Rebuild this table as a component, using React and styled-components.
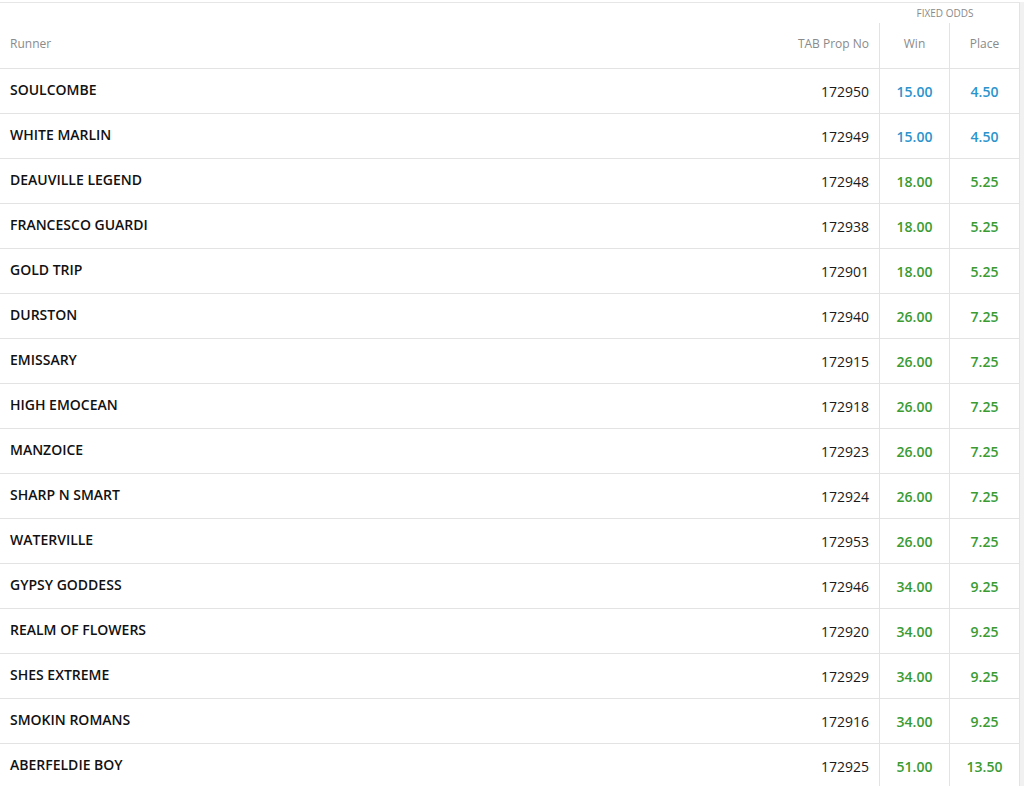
import React from 'react';
import styled, { createGlobalStyle } from 'styled-components';

const GlobalStyle = createGlobalStyle`
  body {
    margin: 0;
    background: #fff;
    font-family: "Open Sans", "Liberation Sans", sans-serif;
  }
`;

const runners = [
  ['SOULCOMBE', '172950', '15.00', '4.50', true],
  ['WHITE MARLIN', '172949', '15.00', '4.50', true],
  ['DEAUVILLE LEGEND', '172948', '18.00', '5.25'],
  ['FRANCESCO GUARDI', '172938', '18.00', '5.25'],
  ['GOLD TRIP', '172901', '18.00', '5.25'],
  ['DURSTON', '172940', '26.00', '7.25'],
  ['EMISSARY', '172915', '26.00', '7.25'],
  ['HIGH EMOCEAN', '172918', '26.00', '7.25'],
  ['MANZOICE', '172923', '26.00', '7.25'],
  ['SHARP N SMART', '172924', '26.00', '7.25'],
  ['WATERVILLE', '172953', '26.00', '7.25'],
  ['GYPSY GODDESS', '172946', '34.00', '9.25'],
  ['REALM OF FLOWERS', '172920', '34.00', '9.25'],
  ['SHES EXTREME', '172929', '34.00', '9.25'],
  ['SMOKIN ROMANS', '172916', '34.00', '9.25'],
  ['ABERFELDIE BOY', '172925', '51.00', '13.50'],
];

const Page = styled.div`
  display: flex;
  height: 786px;
  overflow: hidden;
  padding-top: 2px;
  box-sizing: border-box;
`;

const Table = styled.div`
  width: 1020px;
  border-top: 1px solid #e6e6e6;
  border-right: 1px solid #e3e3e3;
  box-sizing: border-box;
`;

const Gutter = styled.div`
  flex: 1;
  background: #f1f1f1;
`;

const Header = styled.div`
  display: grid;
  grid-template-columns: 1fr 200px 140px;
  height: 65px;
  border-bottom: 1px solid #e3e3e3;
  color: #8a8a8a;
  font-size: 12px;
`;

const HeadCell = styled.div`
  display: flex;
  align-items: center;
  padding: 20px 10px 4px;
  justify-content: ${p => (p.$right ? 'flex-end' : 'flex-start')};
`;

const OddsHead = styled.div`
  display: flex;
  flex-direction: column;
`;

const GroupLabel = styled.div`
  height: 20px;
  display: flex;
  align-items: center;
  justify-content: center;
  font-size: 10px;
  text-transform: uppercase;
  padding-right: 8px;
`;

const SubHead = styled.div`
  flex: 1;
  display: grid;
  grid-template-columns: 70px 70px;
`;

const SubCell = styled.div`
  border-left: 1px solid #e3e3e3;
  display: flex;
  align-items: center;
  justify-content: center;
  padding-bottom: 4px;
`;

const Row = styled.div`
  display: grid;
  grid-template-columns: 1fr 200px 70px 70px;
  height: 44px;
  border-bottom: 1px solid #e3e3e3;
  font-size: 14px;
`;

const Name = styled.div`
  display: flex;
  align-items: center;
  padding: 0 10px 4px;
  font-weight: 600;
  color: #111;
`;

const PropNo = styled.div`
  display: flex;
  align-items: center;
  justify-content: flex-end;
  padding: 0 10px;
  color: #1a1a1a;
`;

const Odds = styled.div`
  display: flex;
  align-items: center;
  justify-content: center;
  border-left: 1px solid #e3e3e3;
  font-weight: 600;
  color: ${p => (p.$blue ? '#2b94cc' : '#3a9b32')};
`;

export default function App() {
  return (
    <Page>
      <GlobalStyle />
      <Table>
        <Header>
          <HeadCell>Runner</HeadCell>
          <HeadCell $right>TAB Prop No</HeadCell>
          <OddsHead>
            <GroupLabel>Fixed Odds</GroupLabel>
            <SubHead>
              <SubCell>Win</SubCell>
              <SubCell>Place</SubCell>
            </SubHead>
          </OddsHead>
        </Header>
        {runners.map(([name, prop, win, place, blue]) => (
          <Row key={prop}>
            <Name>{name}</Name>
            <PropNo>{prop}</PropNo>
            <Odds $blue={blue}>{win}</Odds>
            <Odds $blue={blue}>{place}</Odds>
          </Row>
        ))}
      </Table>
      <Gutter />
    </Page>
  );
}
